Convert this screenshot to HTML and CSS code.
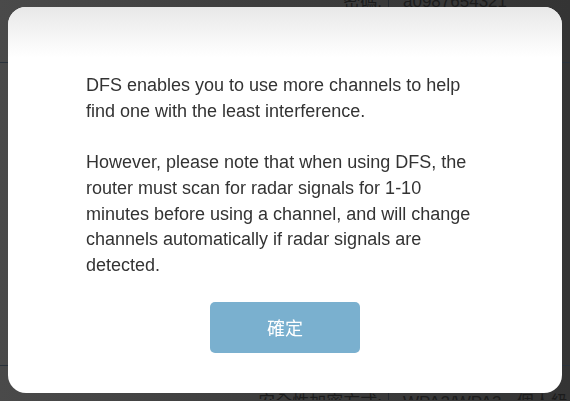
FILE: index.html
```html
<!DOCTYPE html>
<html lang="zh-TW">
<head>
    <meta charset="UTF-8">
    <meta name="viewport" content="width=device-width, initial-scale=1.0">
    <title>DFS</title>
    <link rel="stylesheet" href="styles.css">
</head>
<body>
    <div class="page">
        <div class="setting-row row-top">
            <div class="setting-label">密碼:</div>
            <div class="setting-value">a0987654321</div>
        </div>
        <div class="setting-row row-hidden">
            <div class="setting-label"></div>
            <div class="setting-value"></div>
        </div>
        <div class="setting-row row-bottom">
            <div class="setting-label">安全性加密方式:</div>
            <div class="setting-value">WPA2/WPA3 - 個人級</div>
        </div>
    </div>

    <div class="backdrop">
        <div class="modal">
            <div class="modal-header"></div>
            <div class="modal-body">
                <p>DFS enables you to use more channels to help find one with the least interference.</p>
                <p>However, please note that when using DFS, the router must scan for radar signals for 1-10 minutes before using a channel, and will change channels automatically if radar signals are detected.</p>
            </div>
            <div class="modal-footer">
                <button class="ok-btn">確定</button>
            </div>
        </div>
    </div>
</body>
</html>
```

FILE: styles.css
```css
* {
    margin: 0;
    padding: 0;
    box-sizing: border-box;
}

body, html {
    height: 100%;
    overflow: hidden;
}

body {
    font-family: 'Liberation Sans', Arial, 'Noto Sans CJK TC', sans-serif;
    background: linear-gradient(90deg, #4a4a4a 0%, #3e3e3e 45%, #343434 100%);
}

/* 背景设定页 */
.page {
    color: #1c1c1c;
    font-size: 17px;
    height: 100%;
    overflow: hidden;
}

.setting-row {
    display: flex;
    border-bottom: 1px solid #2b333c;
}

.setting-label {
    width: 388px;
    text-align: right;
    padding-right: 6px;
}

.setting-value {
    flex: 1;
    padding-left: 14px;
    border-left: 1px solid #252a30;
}

.row-top {
    margin-top: -18px;
    height: 81px;
    line-height: 40px;
}

.row-hidden {
    height: 303px;
}

.row-bottom {
    height: 34px;
    padding-top: 17px;
    line-height: 40px;
    border-bottom: none;
    overflow: hidden;
}

/* 弹窗 */
.backdrop {
    position: fixed;
    top: 0;
    left: 0;
    right: 0;
    bottom: 0;
    padding: 7px 8px 8px;
}

.modal {
    width: 554px;
    height: 386px;
    display: flex;
    flex-direction: column;
    background-color: #fff;
    border-radius: 18px;
    overflow: hidden;
}

.modal-header {
    height: 50px;
    background: linear-gradient(to bottom, #e8e8e8, #ffffff);
}

.modal-body {
    padding: 16px 78px 0;
    font-size: 18px;
    line-height: 1.428571;
    color: #333;
}

.modal-body p + p {
    margin-top: 25.7px;
}

.modal-footer {
    display: flex;
    justify-content: center;
    padding-top: 23px;
}

.ok-btn {
    width: 150px;
    height: 51px;
    border: none;
    border-radius: 5px;
    background-color: #7ab0cf;
    color: #fff;
    font-family: 'Noto Sans CJK TC', sans-serif;
    font-size: 18px;
    cursor: pointer;
}
```
